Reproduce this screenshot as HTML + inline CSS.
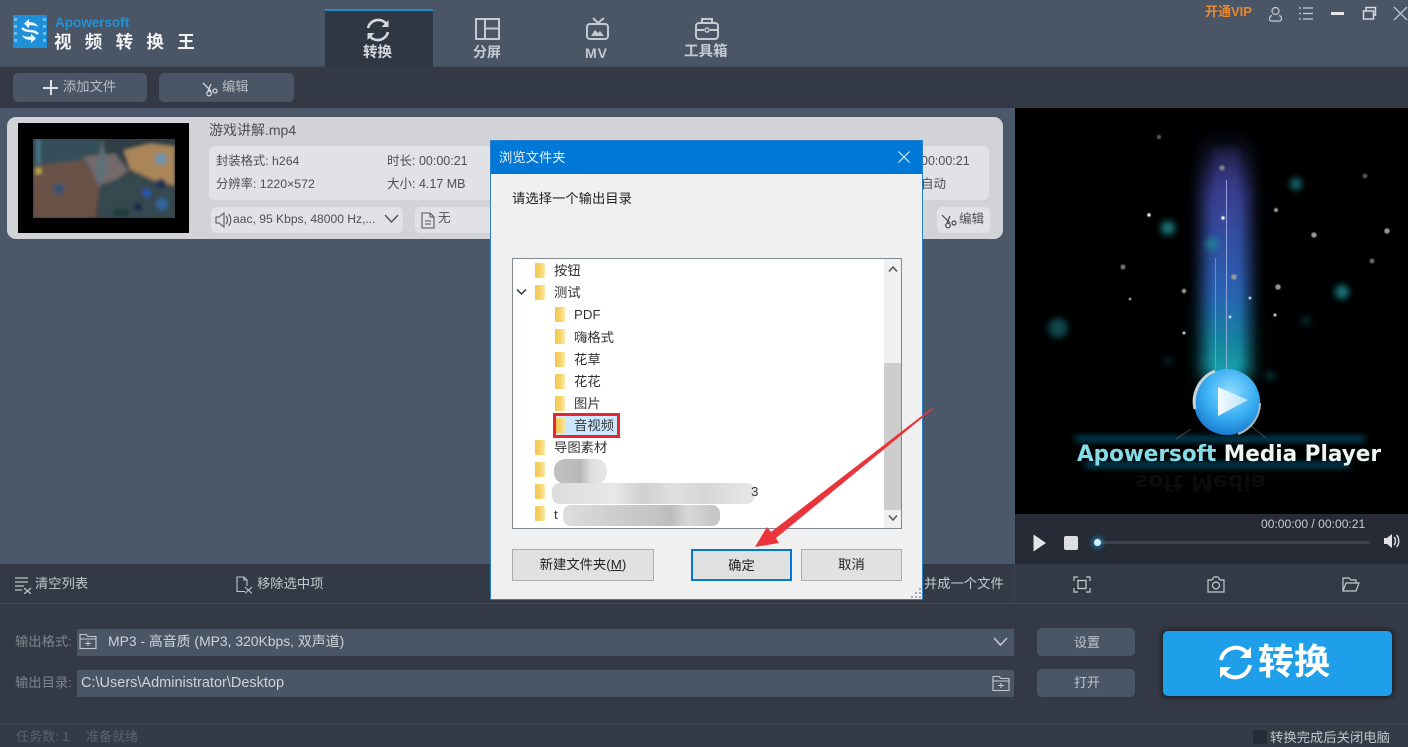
<!DOCTYPE html>
<html lang="zh"><head><meta charset="utf-8"><title>视频转换王</title>
<style>
html,body{margin:0;padding:0;width:1408px;height:747px;overflow:hidden;background:#4a5566}
body{position:relative;font-family:"Liberation Sans","Noto Sans CJK SC",sans-serif;font-size:13px;color:#cfd3d9}
div,span,svg{position:absolute;box-sizing:border-box}
.t{white-space:nowrap;line-height:1}
.btn{background:#4a5566;border-radius:5px}
.fold{width:10px;height:15px;background:linear-gradient(90deg,#f3c64a 0,#f7d672 60%,#fbe9a8 100%);border-radius:1px}
.ti{color:#333;font-size:13.330px;white-space:nowrap;line-height:1}
.wb{background:#e1e1e1;border:1px solid #adadad;color:#222;font-size:13.330px;text-align:center;line-height:30px}
.ic{fill:none;stroke:#c5cad1;stroke-width:1.6}
</style></head><body>

<!-- header -->
<div style="left:0;top:0;width:1408px;height:67px;background:#4a5566;border-bottom:1px solid #3f4957"></div>
<svg style="left:13px;top:15px" width="34" height="33" viewBox="0 0 34 33"><rect width="34" height="33" fill="#1f8fd8"/><g fill="#6fbdea"><rect x="1" y="3" width="3" height="3"/><rect x="1" y="10" width="3" height="3"/><rect x="1" y="17" width="3" height="3"/><rect x="1" y="24" width="3" height="3"/><rect x="30" y="3" width="3" height="3"/><rect x="30" y="10" width="3" height="3"/><rect x="30" y="17" width="3" height="3"/><rect x="30" y="24" width="3" height="3"/></g><path d="M11 8.500l5-4.500v3c5 0 8 2 9 5-2-1.500-5-2-9-1.500v3zM23 23.500l-5 4.500v-3c-5 0-8-2-9-5 2 1.500 5 2 9 1.500v-3z" fill="#eaf5fc"/><path d="M9 13c2 2 5 3 8 3s6 1 8 3" fill="none" stroke="#eaf5fc" stroke-width="2.500"/></svg>
<div class="t" style="left:55px;top:16px;font-size:13.500px;font-weight:700;color:#2393d6">Apowersoft</div>
<div class="t" style="left:54px;top:34px;font-size:17.500px;font-weight:700;color:#f2f3f5;letter-spacing:13.300px">视频转换王</div>

<!-- tabs -->
<div style="left:325px;top:9px;width:108px;height:58px;background:#2f3742;border-top:2px solid #2190d0"></div>
<svg style="left:365px;top:17px" width="26" height="26" viewBox="0 0 26 26"><path class="ic" style="stroke:#d5d8dd;stroke-width:2.600" d="M3 11 A10.500 10.500 0 0 1 21.500 7 M23 15 A10.500 10.500 0 0 1 4.500 19"/><path d="M23.500 3v7h-7zM2.500 23v-7h7z" fill="#d5d8dd"/></svg>
<div class="t" style="left:363px;top:46px;font-size:14.500px;font-weight:700;color:#d5d8dd">转换</div>
<svg style="left:474px;top:17px" width="27" height="24" viewBox="0 0 27 24"><path class="ic" style="stroke-width:2" d="M2 2h23v20H2zM11 2v20M11 11.500h14"/></svg>
<div class="t" style="left:473px;top:45px;font-size:14px;font-weight:700;color:#c5cad1">分屏</div>
<svg style="left:585px;top:17px" width="26" height="24" viewBox="0 0 26 24"><rect class="ic" style="stroke-width:2" x="2" y="7" width="21" height="15" rx="3"/><path class="ic" style="stroke-width:2" d="M8 1l5 5 6-5"/><path d="M6 19l4-6 3 3 2-2 4 5z" fill="#c5cad1"/></svg>
<div class="t" style="left:585px;top:46px;font-size:14px;font-weight:700;color:#c5cad1;letter-spacing:1px">MV</div>
<svg style="left:694px;top:17px" width="26" height="24" viewBox="0 0 26 24"><rect class="ic" style="stroke-width:2" x="2" y="6" width="22" height="16" rx="3"/><path class="ic" style="stroke-width:2" d="M8 6V2h10v4M2 13h8M16 13h8"/><circle cx="13" cy="13" r="2" fill="none" stroke="#c5cad1" stroke-width="1.500"/></svg>
<div class="t" style="left:684px;top:45px;font-size:14.500px;font-weight:700;color:#c5cad1">工具箱</div>

<!-- window controls -->
<div class="t" style="left:1205px;top:5px;font-size:13px;font-weight:700;color:#e8882e">开通VIP</div>
<svg style="left:1268px;top:6px" width="15" height="16" viewBox="0 0 15 16"><circle class="ic" style="stroke-width:1.200" cx="7.500" cy="5" r="3.500"/><path class="ic" style="stroke-width:1.200" d="M4 9.500C2 10 1.500 11.500 1.500 13c0 1.500 1 2 2.500 2h7c1.500 0 2.500-.5 2.500-2 0-1.500-.5-3-2.500-3.500"/></svg>
<svg style="left:1298px;top:6px" width="16" height="15" viewBox="0 0 16 15"><path class="ic" style="stroke-width:1.200" d="M5 2h10M5 7.500h10M5 13h10M1 2h2M1 7.500h2M1 13h2"/></svg>
<div style="left:1331px;top:12px;width:13px;height:2.500px;background:#e6e8eb"></div>
<svg style="left:1362px;top:6px" width="15" height="14" viewBox="0 0 15 14"><path d="M1.500 5h10v8h-10zM4 5V1.500h9.500V9h-2" fill="none" stroke="#d5d8dd" stroke-width="1.500"/></svg>
<svg style="left:1393px;top:6px" width="15" height="15" viewBox="0 0 15 15"><path d="M1 1l13 13M14 1L1 14" stroke="#c5cad1" stroke-width="1.300"/></svg>

<!-- toolbar -->
<div style="left:0;top:67px;width:1408px;height:41px;background:#333a45"></div>
<div class="btn" style="left:13px;top:73px;width:134px;height:29px"></div>
<div style="left:43px;top:87px;width:15px;height:2px;background:#dfe2e6"></div><div style="left:49.500px;top:80px;width:2px;height:15px;background:#dfe2e6"></div>
<div class="t" style="left:63px;top:80px;font-size:13.300px;color:#b7bcc4">添加文件</div>
<div class="btn" style="left:159px;top:73px;width:135px;height:29px"></div>
<svg style="left:202px;top:80px" width="17" height="17" viewBox="0 0 17 17"><path d="M1 3l8 8M9 4L6 11" stroke="#d0d4d9" stroke-width="1.300" fill="none"/><circle cx="7" cy="13.500" r="2.300" fill="none" stroke="#d0d4d9" stroke-width="1.300"/><circle cx="13" cy="11" r="2" fill="none" stroke="#d0d4d9" stroke-width="1.300"/></svg>
<div class="t" style="left:222px;top:80px;font-size:13.300px;color:#b7bcc4">编辑</div>

<!-- list area -->
<div style="left:0;top:108px;width:1015px;height:456px;background:#4b5869"></div>
<div style="left:7px;top:117px;width:996px;height:122px;background:#d1d3d6;border-radius:9px"></div>
<div style="left:18px;top:123px;width:171px;height:110px;background:#000"></div>
<svg style="left:33px;top:139px" width="142" height="79" viewBox="0 0 142 79"><defs><filter id="bl" filterUnits="userSpaceOnUse" x="0" y="0" width="142" height="79"><feGaussianBlur stdDeviation="1.800"/></filter></defs><rect width="142" height="79" fill="#2f3d44"/><g filter="url(#bl)"><path d="M0 0H70L62 20 0 27z" fill="#35505a"/><path d="M0 27L50 21 67 47 63 79H0z" fill="#6b5145"/><path d="M90 11L117 4 142 7V47L120 41 97 31z" fill="#a98558"/><path d="M65 79L68 45 100 35 142 48V79z" fill="#36484f"/><path d="M50 18L82 14 96 32 84 40 66 46z" fill="#75696a"/><circle cx="128" cy="20" r="6" fill="#6f93a8"/><circle cx="26" cy="50" r="6" fill="#37536c"/><circle cx="128" cy="45" r="5" fill="#1d2f58"/><circle cx="129" cy="65" r="6" fill="#33639a"/><circle cx="105" cy="68" r="4" fill="#132548"/><circle cx="114" cy="54" r="4" fill="#2a55b0"/><path d="M70 0l4 30-8 20-4-20z" fill="#5d6f78"/><rect x="80" y="70" width="16" height="7" fill="#1e3a36"/><rect x="3" y="29" width="5" height="6" fill="#c4b14c"/><rect x="4" y="0" width="3" height="25" fill="#4e7f95"/></g></svg>
<div class="t" style="left:209px;top:123px;font-size:14px;color:#4c4f54">游戏讲解.mp4</div>
<div style="left:209px;top:146px;width:780px;height:54px;background:#e0e2e5;border-radius:6px"></div>
<div class="t" style="left:216px;top:155px;font-size:12.300px;color:#4c4f54">封装格式: h264</div>
<div class="t" style="left:387px;top:155px;font-size:12.500px;color:#4c4f54">时长: 00:00:21</div>
<div class="t" style="left:216px;top:178px;font-size:12.300px;color:#4c4f54">分辨率: 1220×572</div>
<div class="t" style="left:387px;top:178px;font-size:12.500px;color:#4c4f54">大小: 4.17 MB</div>
<div style="left:211px;top:207px;width:192px;height:26px;background:#e0e2e5;border-radius:5px"></div>
<svg style="left:215px;top:212px" width="18" height="16" viewBox="0 0 18 16"><path d="M1 5h3l5-4v14l-5-4H1zM11 4c2 2 2 6 0 8M13.500 2c3 3 3 9 0 12" fill="none" stroke="#55585d" stroke-width="1.100"/></svg>
<div class="t" style="left:233px;top:213px;font-size:12.100px;color:#4c4f54">aac, 95 Kbps, 48000 Hz,...</div>
<svg style="left:384px;top:214px" width="15" height="10" viewBox="0 0 15 10"><path d="M1 1l6.500 7L14 1" fill="none" stroke="#55585d" stroke-width="1.500"/></svg>
<div style="left:415px;top:207px;width:90px;height:26px;background:#e0e2e5;border-radius:5px"></div>
<svg style="left:421px;top:212px" width="14" height="17" viewBox="0 0 14 17"><path d="M1 1h8l4 4v11H1zM9 1v4h4M4 9h6M4 12h6" fill="none" stroke="#55585d" stroke-width="1.100"/></svg>
<div class="t" style="left:438px;top:212px;font-size:12.500px;color:#4c4f54">无</div>
<div class="t" style="left:921px;top:155px;font-size:12.500px;color:#4c4f54">00:00:21</div>
<div class="t" style="left:921px;top:178px;font-size:12.500px;color:#4c4f54">自动</div>
<div style="left:937px;top:207px;width:53px;height:26px;background:#e0e2e5;border-radius:5px"></div>
<svg style="left:941px;top:212px" width="17" height="17" viewBox="0 0 17 17"><path d="M1 3l8 8M9 4L6 11" stroke="#44474c" stroke-width="1.200" fill="none"/><circle cx="7" cy="13.500" r="2.300" fill="none" stroke="#44474c" stroke-width="1.200"/><circle cx="13" cy="11" r="2" fill="none" stroke="#44474c" stroke-width="1.200"/></svg>
<div class="t" style="left:959px;top:213px;font-size:12.500px;color:#4c4f54">编辑</div>

<!-- video panel -->
<svg style="left:1015px;top:108px" width="393" height="406" viewBox="0 0 393 406">
<defs>
<linearGradient id="beam" gradientUnits="userSpaceOnUse" x1="0" y1="25" x2="0" y2="270"><stop offset="0" stop-color="#3a3a80" stop-opacity="0"/><stop offset=".25" stop-color="#3a3e90"/><stop offset=".65" stop-color="#2a62b4"/><stop offset=".88" stop-color="#128a9e"/><stop offset="1" stop-color="#18a8b4"/></linearGradient>
<radialGradient id="ball" cx=".55" cy=".35" r=".7"><stop offset="0" stop-color="#8fdcff"/><stop offset=".55" stop-color="#38aef2"/><stop offset="1" stop-color="#1574cc"/></radialGradient>
<linearGradient id="pl" x1="0" y1="0" x2="1" y2="0"><stop offset="0" stop-color="#f4fbff"/><stop offset="1" stop-color="#b8e2fb"/></linearGradient>
<filter id="b4" filterUnits="userSpaceOnUse" x="0" y="0" width="393" height="406"><feGaussianBlur stdDeviation="3.500"/></filter>
<filter id="b10" filterUnits="userSpaceOnUse" x="0" y="0" width="393" height="406"><feGaussianBlur stdDeviation="8"/></filter>
<filter id="b1" filterUnits="userSpaceOnUse" x="0" y="0" width="393" height="406"><feGaussianBlur stdDeviation="0.500"/></filter>
</defs>
<rect width="393" height="406" fill="#000"/>
<rect x="187" y="25" width="48" height="245" fill="url(#beam)" filter="url(#b10)"/>
<rect x="199" y="40" width="25" height="226" fill="url(#beam)" filter="url(#b4)" opacity=".9"/>
<path d="M211.500 72V262" stroke="#a8b8ea" stroke-width="1" opacity=".8"/><path d="M200.500 150V262" stroke="#6fb8d8" stroke-width="1" opacity=".65"/>
<g fill="#1c8d92" filter="url(#b4)" opacity=".85"><circle cx="153" cy="120" r="7"/><circle cx="197" cy="136" r="6"/><circle cx="281" cy="76" r="5.500"/><circle cx="327" cy="184" r="7"/><circle cx="43" cy="220" r="10" opacity=".6"/><circle cx="255" cy="268" r="4.500" opacity=".5"/><circle cx="291" cy="213" r="5" opacity=".35"/><circle cx="153" cy="253" r="5" opacity=".25"/></g>
<g fill="#fff" filter="url(#b1)"><circle cx="134" cy="107" r="1.700"/><circle cx="208" cy="110" r="1.700"/><circle cx="115" cy="191" r="1.100"/><circle cx="235" cy="190" r="1.300"/><circle cx="215" cy="209" r="1.300"/><circle cx="260" cy="207" r="1.400"/><circle cx="169" cy="225" r="1.400"/></g>
<g fill="#9a9a9a" filter="url(#b1)"><circle cx="144" cy="29" r="2.200" opacity=".55"/><circle cx="207" cy="60" r="2.700" opacity=".7"/><circle cx="350" cy="68" r="2.400" opacity=".55"/><circle cx="261" cy="102" r="2"/><circle cx="299" cy="127" r="2.700"/><circle cx="372" cy="123" r="2.700"/><circle cx="357" cy="153" r="2.500" opacity=".65"/><circle cx="108" cy="159" r="2.500" opacity=".75"/><circle cx="169" cy="183" r="2.200"/><circle cx="219" cy="169" r="2.700"/><circle cx="263" cy="179" r="2.700"/></g>
<path d="M60 331H350M70 357H335" stroke="#0f78a4" stroke-width="3.500" filter="url(#b4)"/>
<path d="M176 321l-15 10M236 318l15 12" stroke="#6a5e56" stroke-width="1" opacity=".7"/>
<circle cx="212" cy="294" r="33" fill="url(#ball)"/><path d="M180 301a33 33 0 0 1 20-38" stroke="#c8d4d8" stroke-width="3" fill="none"/><path d="M203 279l30 13-30 16z" fill="url(#pl)"/><path d="M245 295a33 33 0 0 1-22 31" stroke="#a8b8bc" stroke-width="2" fill="none"/>
<text x="62" y="353" font-family="'DejaVu Sans','Liberation Sans',sans-serif" font-weight="700" font-size="22" textLength="304" lengthAdjust="spacingAndGlyphs"><tspan fill="#86dbe8">Apowersoft</tspan><tspan fill="#eef6f2"> Media Player</tspan></text>
<text x="120" y="367" font-family="'DejaVu Sans','Liberation Sans',sans-serif" font-weight="700" font-size="22" fill="#0b0b0b" transform="matrix(1 0 0 -1 0 734)">soft Media</text>
</svg>

<!-- player controls -->
<div style="left:1015px;top:514px;width:393px;height:50px;background:#262b35"></div>
<div class="t" style="left:1261px;top:518px;font-size:12.100px;color:#c8ccd1">00:00:00 / 00:00:21</div>
<svg style="left:1033px;top:534px" width="14" height="18"><path d="M0.500 0.500L13 9 0.500 17.500z" fill="#e3e5e8"/></svg>
<div style="left:1064px;top:536px;width:14px;height:14px;background:#dcdee1;border-radius:2px"></div>
<div style="left:1097px;top:541px;width:273px;height:3px;background:#3d434e;border-radius:2px"></div>
<div style="left:1094px;top:539px;width:7px;height:7px;background:#d8f2ff;border-radius:50%;box-shadow:0 0 5px 2px #1d7ba8"></div>
<svg style="left:1383px;top:532px" width="18" height="18" viewBox="0 0 18 18"><path d="M1 6h3l5-4v14l-5-4H1z" fill="#dfe1e4"/><path d="M11 5c2 2 2 6 0 8M13.500 3c3 3 3 9 0 12" fill="none" stroke="#dfe1e4" stroke-width="1.400"/></svg>

<!-- action bar -->
<div style="left:0;top:564px;width:1408px;height:40px;background:#333a45;border-bottom:1px solid #414c58"></div>
<svg style="left:15px;top:576px" width="17" height="18" viewBox="0 0 17 18"><path d="M0 2h13M0 6h13M0 10h9M0 14h7M9 12l7 6M16 12l-7 6" stroke="#bfc4ca" stroke-width="1.200" fill="none"/></svg>
<div class="t" style="left:35px;top:577px;font-size:13.300px;color:#c5c9ce">清空列表</div>
<svg style="left:236px;top:576px" width="18" height="18" viewBox="0 0 18 18"><path d="M9 15.500H1V1h7l3 3v6M8 1v3h3M9 11l7 6.500M16 11l-7 6.500" stroke="#bfc4ca" stroke-width="1.100" fill="none"/></svg>
<div class="t" style="left:257px;top:577px;font-size:13.300px;color:#c5c9ce">移除选中项</div>
<div class="t" style="left:924px;top:577px;font-size:13.300px;color:#c5c9ce">并成一个文件</div>
<div style="left:1014px;top:564px;width:1px;height:39px;background:#3d4450"></div>
<svg style="left:1073px;top:576px" width="18" height="17" viewBox="0 0 18 17"><path d="M1 5V1h4M13 1h4v4M17 12v4h-4M5 16H1v-4" fill="none" stroke="#c5cad1" stroke-width="1.200"/><rect x="5" y="4.500" width="8" height="8" fill="none" stroke="#c5cad1" stroke-width="1.300"/></svg>
<svg style="left:1207px;top:576px" width="18" height="17" viewBox="0 0 18 17"><path d="M1 4h4l2-3h4l2 3h4v12H1z" fill="none" stroke="#c5cad1" stroke-width="1.200"/><circle cx="9" cy="9.500" r="3.500" fill="none" stroke="#c5cad1" stroke-width="1.200"/></svg>
<svg style="left:1342px;top:577px" width="18" height="15" viewBox="0 0 18 15"><path d="M1 14V1h6l2 2h5v3M1 14l3-8h13l-3 8z" fill="none" stroke="#c5cad1" stroke-width="1.200"/></svg>

<!-- output section -->
<div style="left:0;top:604px;width:1408px;height:119px;background:#333a45"></div>
<div class="t" style="left:15px;top:635px;font-size:13.300px;color:#7e858e">输出格式:</div>
<div style="left:77px;top:629px;width:937px;height:27px;background:#4a5566"></div>
<svg style="left:79px;top:633px" width="18" height="17" viewBox="0 0 18 17"><path d="M1 15.500V1.500h6l2 2h8v12zM1 6h16M6 10.500h6M9 8v5" fill="none" stroke="#c5cad1" stroke-width="1.100"/></svg>
<div class="t" style="left:108px;top:635px;font-size:13.900px;color:#cfd3d8">MP3 - 高音质 (MP3, 320Kbps, 双声道)</div>
<svg style="left:993px;top:637px" width="15" height="10" viewBox="0 0 15 10"><path d="M1 1l6.500 7L14 1" fill="none" stroke="#c5cad1" stroke-width="1.500"/></svg>
<div class="t" style="left:15px;top:676px;font-size:13.300px;color:#7e858e">输出目录:</div>
<div style="left:77px;top:670px;width:937px;height:27px;background:#4a5566"></div>
<div class="t" style="left:81px;top:676px;font-size:14.500px;color:#cfd3d8">C:\Users\Administrator\Desktop</div>
<svg style="left:992px;top:675px" width="18" height="17" viewBox="0 0 18 17"><path d="M1 15.500V1.500h6l2 2h8v12zM1 6h16M6 10.500h6M9 8v5" fill="none" stroke="#c5cad1" stroke-width="1.100"/></svg>
<div class="btn" style="left:1037px;top:628px;width:98px;height:28px"></div>
<div class="t" style="left:1074px;top:636px;font-size:13px;color:#c0c4ca">设置</div>
<div class="btn" style="left:1037px;top:669px;width:98px;height:28px"></div>
<div class="t" style="left:1074px;top:676px;font-size:13px;color:#c0c4ca">打开</div>
<div style="left:1163px;top:631px;width:229px;height:65px;background:#1f9fe9;border-radius:5px;box-shadow:0 0 4px 2px #1f232b"></div>
<svg style="left:1217px;top:644px" width="37" height="37" viewBox="0 0 37 37"><path d="M4 16A15 15 0 0 1 31 10M33 21A15 15 0 0 1 6 27" fill="none" stroke="#fff" stroke-width="4"/><path d="M34 3v11H23zM3 34V23h11z" fill="#fff"/></svg>
<div class="t" style="left:1258px;top:644px;font-size:36px;font-weight:700;color:#fff">转换</div>

<!-- status -->
<div style="left:0;top:723px;width:1408px;height:24px;background:#343b46;border-top:1px solid #3b4350"></div>
<div class="t" style="left:16px;top:730px;font-size:13px;color:#5b626c">任务数: 1</div>
<div class="t" style="left:86px;top:730px;font-size:13px;color:#5b626c">准备就绪</div>
<div style="left:1253px;top:730px;width:14px;height:14px;background:#262b35"></div>
<div class="t" style="left:1270px;top:731px;font-size:13.330px;color:#c0c4ca">转换完成后关闭电脑</div>

<!-- dialog -->
<div style="left:490px;top:140px;width:433px;height:460px;background:#f0f0f0;border:1px solid #2a7fc9"></div>
<div style="left:491px;top:141px;width:431px;height:33px;background:#0078d7"></div>
<div class="t" style="left:499px;top:151px;font-size:13.330px;color:#e8f2fb">浏览文件夹</div>
<svg style="left:898px;top:151px" width="12" height="12"><path d="M0.500 0.500l11 11M11.500 0.500l-11 11" stroke="#e8f2fb" stroke-width="1"/></svg>
<div class="t" style="left:512px;top:192px;font-size:13.330px;color:#222">请选择一个输出目录</div>

<!-- tree -->
<div style="left:512px;top:258px;width:390px;height:271px;background:#fff;border:1px solid #828790"></div>
<div style="left:884px;top:259px;width:17px;height:269px;background:#f0f0f0"></div>
<div style="left:884px;top:363px;width:17px;height:147px;background:#cdcdcd"></div>
<svg style="left:888px;top:265px" width="10" height="8"><path d="M1 6.500l4-4.500 4 4.500" fill="none" stroke="#555" stroke-width="1.500"/></svg>
<svg style="left:888px;top:514px" width="10" height="8"><path d="M1 1.500l4 4.500 4-4.500" fill="none" stroke="#555" stroke-width="1.500"/></svg>
<svg style="left:516px;top:288px" width="11" height="8"><path d="M1 1.500l4.500 4.500L10 1.500" fill="none" stroke="#333" stroke-width="1.500"/></svg>
<div class="fold" style="left:535px;top:263px"></div><div class="ti" style="left:554px;top:264px">按钮</div>
<div class="fold" style="left:535px;top:285px"></div><div class="ti" style="left:554px;top:286px">测试</div>
<div class="fold" style="left:555px;top:307px"></div><div class="ti" style="left:574px;top:308px">PDF</div>
<div class="fold" style="left:555px;top:329px"></div><div class="ti" style="left:574px;top:331px">嗨格式</div>
<div class="fold" style="left:555px;top:352px"></div><div class="ti" style="left:574px;top:353px">花草</div>
<div class="fold" style="left:555px;top:374px"></div><div class="ti" style="left:574px;top:375px">花花</div>
<div class="fold" style="left:555px;top:396px"></div><div class="ti" style="left:574px;top:397px">图片</div>
<div style="left:553px;top:413px;width:67px;height:25px;background:#cce8ff;border:3px solid #e8262f"></div>
<div class="fold" style="left:556px;top:418px;width:9px"></div><div class="ti" style="left:574px;top:419px">音视频</div>
<div class="fold" style="left:535px;top:440px"></div><div class="ti" style="left:554px;top:441px">导图素材</div>
<div class="fold" style="left:535px;top:462px"></div><div class="fold" style="left:535px;top:484px"></div><div class="fold" style="left:535px;top:506px"></div>
<div style="left:554px;top:459px;width:53px;height:25px;border-radius:11px;background:linear-gradient(90deg,#c2c2c2 0,#b8b8b8 50%,#dedede 70%,#e8e8e8 100%)"></div>
<div style="left:552px;top:483px;width:203px;height:21px;border-radius:8px;background:linear-gradient(90deg,#dcdcdc 0,#e8e8e8 30%,#d0d0d0 45%,#e0e0e0 60%,#d6d6d6 75%,#e8e8e8 100%)"></div>
<div class="ti" style="left:751px;top:485px">3</div>
<div class="ti" style="left:554px;top:508px">t</div>
<div style="left:563px;top:505px;width:157px;height:21px;border-radius:8px;background:linear-gradient(90deg,#dedede 0,#cfcfcf 30%,#c2c2c2 62%,#bcbcbc 68%,#d8d8d8 80%,#c6c6c6 95%)"></div>

<!-- dialog buttons -->
<div class="wb" style="left:512px;top:549px;width:142px;height:32px">新建文件夹(<u>M</u>)</div>
<div class="wb" style="left:691px;top:549px;width:101px;height:32px;border:2px solid #0078d7;line-height:29px">确定</div>
<div class="wb" style="left:801px;top:549px;width:101px;height:32px">取消</div>
<svg style="left:911px;top:588px" width="11" height="11"><g fill="#a8a8a8"><rect x="8" y="8" width="2" height="2"/><rect x="4" y="8" width="2" height="2"/><rect x="8" y="4" width="2" height="2"/><rect x="0" y="8" width="2" height="2"/><rect x="4" y="4" width="2" height="2"/><rect x="8" y="0" width="2" height="2"/></g></svg>

<!-- arrow -->
<svg style="left:750px;top:400px" width="190" height="152" viewBox="0 0 190 152"><path d="M182 8L183 9 26 138 29 143 5 147 17 127 21 132Z" fill="#e9343b"/></svg>

</body></html>
